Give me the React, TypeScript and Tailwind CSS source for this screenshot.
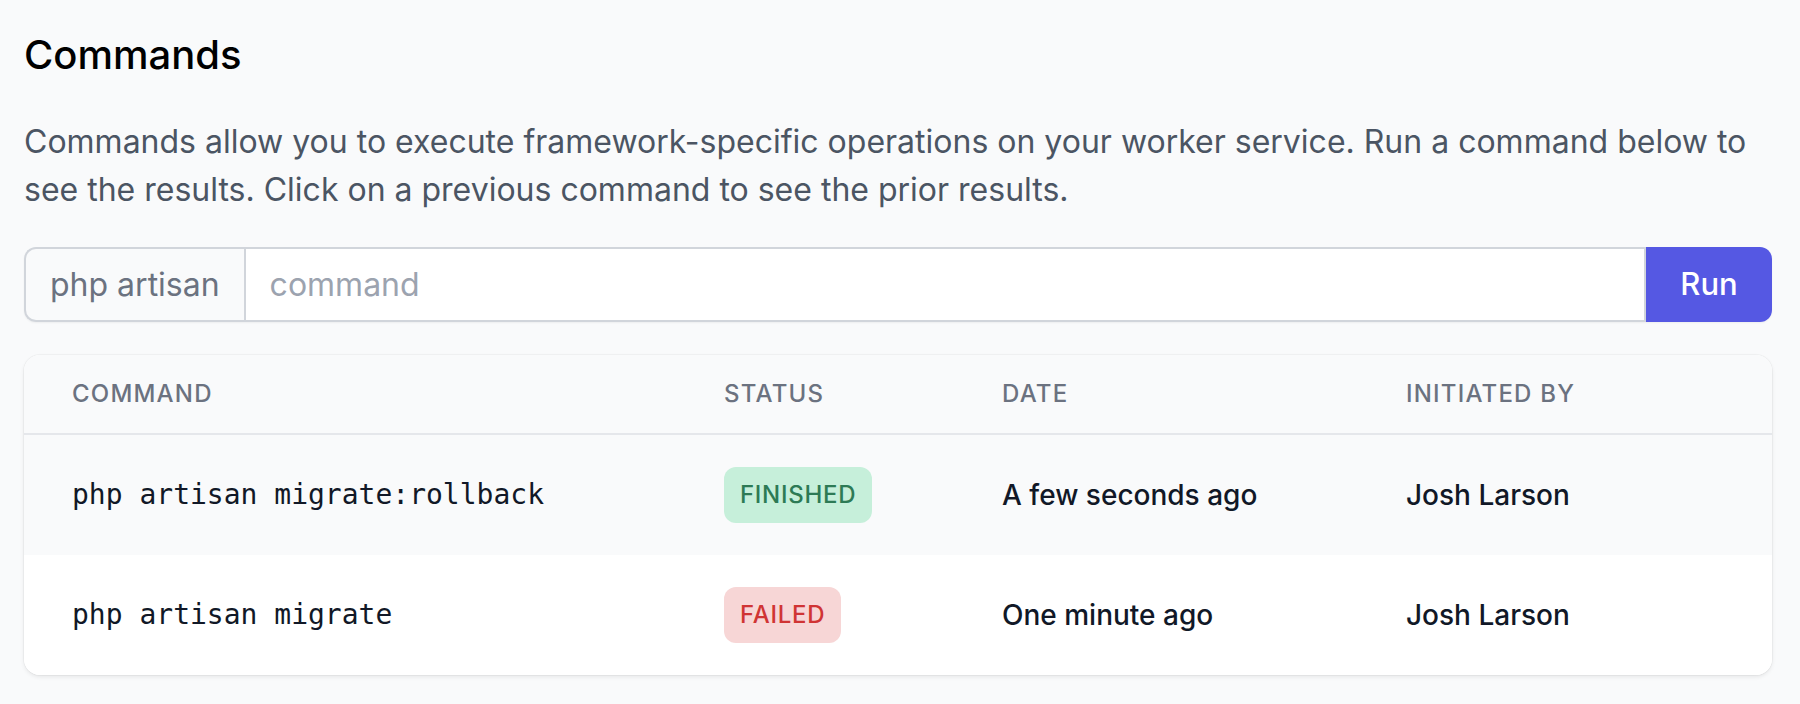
import React from "react";

const rows = [
  { cmd: "php artisan migrate:rollback", status: "FINISHED", date: "A few seconds ago", by: "Josh Larson", bg: "bg-[#f9fafb]" },
  { cmd: "php artisan migrate", status: "FAILED", date: "One minute ago", by: "Josh Larson", bg: "bg-white" },
];

export default function App() {
  return (
    <div className="min-h-[704px] bg-[#f9fafb] pl-[24px] pr-[28px] pt-[27px] font-['Inter',sans-serif]">
      <h2 className="text-[40px] leading-[56px] font-medium text-black">Commands</h2>
      <p className="mt-[35px] text-[32px] leading-[48px] text-[#4b5563]">
        Commands allow you to execute framework-specific operations on your worker service. Run a command below to see the results. Click on a previous command to see the prior results.
      </p>
      <div className="mt-[33px] flex h-[75px] rounded-[12px] shadow-[0_1px_2px_rgba(0,0,0,0.05)]">
        <div className="flex items-center rounded-l-[12px] border-[2px] border-r-0 border-[#d1d5db] bg-[#f9fafb] px-[24px] text-[32px] text-[#6b7280]">
          php artisan
        </div>
        <div className="flex flex-1 items-center border-[2px] border-[#d1d5db] bg-white px-[24px] text-[32px] text-[#9ca3af]">
          command
        </div>
        <button className="flex w-[126px] items-center justify-center rounded-r-[12px] bg-[#5558e3] text-[31px] font-medium text-white">
          Run
        </button>
      </div>
      <div className="mt-[33px] overflow-hidden rounded-[16px] bg-white shadow-[0_2px_4px_rgba(0,0,0,0.08),0_0_0_1px_rgba(0,0,0,0.03)]">
        <div className="grid h-[80px] grid-cols-[652px_278px_404px_1fr] items-center border-b-[2px] border-[#e5e7eb] bg-[#f9fafb] text-[24px] font-medium uppercase tracking-[0.05em] text-[#6b7280]">
          <div className="pl-[48px]">Command</div>
          <div className="pl-[48px]">Status</div>
          <div className="pl-[48px]">Date</div>
          <div className="pl-[48px]">Initiated By</div>
        </div>
        {rows.map((r) => (
          <div key={r.cmd} className={`grid h-[120px] grid-cols-[652px_278px_404px_1fr] items-center ${r.bg}`}>
            <div className="pl-[48px] font-['DejaVu_Sans_Mono',monospace] text-[28px] text-[#111827]">{r.cmd}</div>
            <div className="pl-[48px]">
              {r.status === "FINISHED" ? (
                <span className="inline-flex h-[56px] items-center rounded-[12px] bg-[#c6efda] px-[16px] text-[24px] font-medium tracking-[0.03em] text-[#2d7a55]">
                  FINISHED
                </span>
              ) : (
                <span className="inline-flex h-[56px] items-center rounded-[12px] bg-[#f7d6d6] px-[16px] text-[24px] font-medium tracking-[0.03em] text-[#d03434]">
                  FAILED
                </span>
              )}
            </div>
            <div className="pl-[48px] text-[28px] font-medium text-[#111827]">{r.date}</div>
            <div className="pl-[48px] text-[28px] font-medium text-[#111827]">{r.by}</div>
          </div>
        ))}
      </div>
    </div>
  );
}
